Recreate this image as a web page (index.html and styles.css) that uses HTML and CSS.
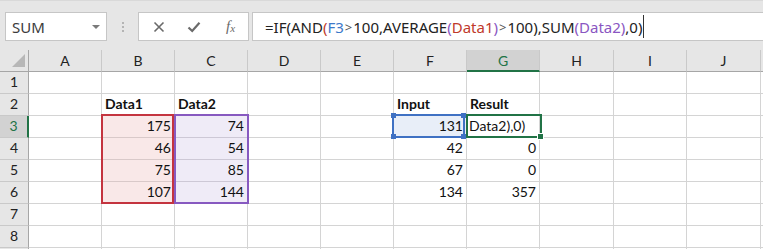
FILE: index.html
```html
<!DOCTYPE html>
<html>
<head>
<meta charset="utf-8">
<link rel="stylesheet" href="styles.css">
</head>
<body>
<div class="app">
  <div class="fbar">
    <div class="namebox">
      <span class="name">SUM</span>
      <svg class="dd" width="8" height="4" viewBox="0 0 8 4"><path d="M0 0H8L4 4Z" fill="#7a7a7a"/></svg>
    </div>
    <div class="dots"><i></i><i></i><i></i></div>
    <div class="btns">
      <svg class="ico" width="12" height="12" viewBox="0 0 12 12"><path d="M1.5 1.5L10.5 10.5M10.5 1.5L1.5 10.5" stroke="#6a6a6a" stroke-width="1.6" fill="none"/></svg>
      <svg class="ico" width="14" height="12" viewBox="0 0 14 12"><path d="M1.5 6.5L5.2 10L12.5 1.8" stroke="#6a6a6a" stroke-width="2.2" fill="none"/></svg>
      <span class="fx">f<sub>x</sub></span>
    </div>
    <div class="formula">
      <span>=IF(AND</span><span class="cr">(</span><span class="cb">F3</span><span class="gt">&gt;</span><span>100,AVERAGE</span><span class="cp">(</span><span class="cr">Data1</span><span class="cp">)</span><span class="gt">&gt;</span><span>100),SUM</span><span class="cp">(Data2)</span><span>,0)</span><span class="caret"></span>
    </div>
  </div>
  <div class="sheet">
    <div class="ch corner"><span class="tri"></span></div>
    <div class="ch">A</div><div class="ch">B</div><div class="ch">C</div><div class="ch">D</div><div class="ch">E</div><div class="ch">F</div><div class="ch sel">G</div><div class="ch">H</div><div class="ch">I</div><div class="ch">J</div><div class="ch last"></div>

    <div class="rh">1</div><div class="c"></div><div class="c"></div><div class="c"></div><div class="c"></div><div class="c"></div><div class="c"></div><div class="c"></div><div class="c"></div><div class="c"></div><div class="c"></div><div class="c"></div>

    <div class="rh">2</div><div class="c"></div><div class="c b">Data1</div><div class="c b">Data2</div><div class="c"></div><div class="c"></div><div class="c b">Input</div><div class="c b">Result</div><div class="c"></div><div class="c"></div><div class="c"></div><div class="c"></div>

    <div class="rh sel">3</div><div class="c"></div><div class="c n red">175</div><div class="c n pur">74</div><div class="c"></div><div class="c"></div><div class="c n blu">131</div><div class="c edit">Data2),0)</div><div class="c"></div><div class="c"></div><div class="c"></div><div class="c"></div>

    <div class="rh">4</div><div class="c"></div><div class="c n red">46</div><div class="c n pur">54</div><div class="c"></div><div class="c"></div><div class="c n">42</div><div class="c n">0</div><div class="c"></div><div class="c"></div><div class="c"></div><div class="c"></div>

    <div class="rh">5</div><div class="c"></div><div class="c n red">75</div><div class="c n pur">85</div><div class="c"></div><div class="c"></div><div class="c n">67</div><div class="c n">0</div><div class="c"></div><div class="c"></div><div class="c"></div><div class="c"></div>

    <div class="rh">6</div><div class="c"></div><div class="c n red">107</div><div class="c n pur">144</div><div class="c"></div><div class="c"></div><div class="c n">134</div><div class="c n">357</div><div class="c"></div><div class="c"></div><div class="c"></div><div class="c"></div>

    <div class="rh">7</div><div class="c"></div><div class="c"></div><div class="c"></div><div class="c"></div><div class="c"></div><div class="c"></div><div class="c"></div><div class="c"></div><div class="c"></div><div class="c"></div><div class="c"></div>

    <div class="rh">8</div><div class="c"></div><div class="c"></div><div class="c"></div><div class="c"></div><div class="c"></div><div class="c"></div><div class="c"></div><div class="c"></div><div class="c"></div><div class="c"></div><div class="c"></div>

    <div class="rh"></div><div class="c"></div><div class="c"></div><div class="c"></div><div class="c"></div><div class="c"></div><div class="c"></div><div class="c"></div><div class="c"></div><div class="c"></div><div class="c"></div><div class="c"></div>

    <div class="box box-red"></div>
    <div class="box box-pur"></div>
    <div class="box box-blu"><i class="h tl"></i><i class="h tr"></i><i class="h bl"></i><i class="h br"></i></div>
    <div class="box box-grn"><i class="gh"></i></div>
  </div>
</div>
</body>
</html>
```
FILE: styles.css
```css
* { box-sizing: border-box; }
html, body { margin: 0; padding: 0; }
body { background: #fff; width: 763px; height: 249px; overflow: hidden; }
.app { width: 763px; }

.fbar {
  background: #e6e6e6;
  height: 50px;
  display: flex;
  align-items: flex-start;
  padding: 12px 0 0 5px;
  border-top: 1px solid #d9d9d9;
}
.namebox {
  width: 102px; height: 29px;
  background: #fff; border: 1px solid #c6c6c6;
  display: flex; align-items: center; justify-content: space-between;
  padding: 0 6px 0 6px;
  margin-top: -1px;
}
.name { font-family: "Noto Sans", sans-serif; font-size: 15px; color: #3b3b3b; }
.dd { margin-top: 1px; }
.dots { width: 31px; display: flex; flex-direction: column; align-items: center; gap: 2px; padding-top: 9px; }
.dots i { display: block; width: 2px; height: 2px; background: #b4b4b4; }
.btns {
  width: 111px; height: 29px; margin-top: -1px;
  background: #fff; border: 1px solid #c6c6c6;
  display: flex; align-items: center;
  padding: 0 0 0 14px;
  gap: 22px;
}
.fx { font-family: "Liberation Serif", serif; font-style: italic; font-size: 15px; color: #6a6a6a; line-height: 1; margin-left: 3px; }
.fx sub { font-size: 11px; vertical-align: 0; position: relative; top: 1px; }
.formula {
  flex: 1; height: 29px; margin-top: -1px; margin-left: 3px;
  background: #fff; border: 1px solid #c6c6c6; border-right: none;
  display: flex; align-items: center;
  padding-left: 12px;
  font-family: "Noto Sans", sans-serif; font-size: 15px; color: #222;
  white-space: pre;
}
.cr { color: #c0392b; }
.cb { color: #3d78c9; }
.cp { color: #8a56c2; }
.gt { color: #555; padding: 0 1px; font-size: 13px; }
.caret { display: inline-block; width: 1px; height: 23px; background: #333; margin-left: 1px; }

.sheet {
  position: relative;
  display: grid;
  grid-template-columns: 29px 73px 73px 73px 73px 73px 73px 73px 74px 73px 74px 1fr;
  grid-template-rows: repeat(10, 22px);
  font-family: Lato, "Liberation Sans", sans-serif;
  font-size: 14px;
  color: #111;
  background: #e6e6e6;
}
.ch {
  background: #e6e6e6;
  border-right: 1px solid #c9c9c9;
  border-bottom: 1px solid #a6a6a6;
  display: flex; align-items: center; justify-content: center;
  color: #222; line-height: 16px; padding-top: 1px;
}
.ch.last { border-right: none; }
.ch.sel { background: #d2d2d2; color: #217346; border-bottom: 2px solid #217346; padding-top: 2px; }
.corner { position: relative; border-right: 1px solid #a6a6a6; }
.tri {
  position: absolute; right: 3px; bottom: 4px;
  width: 0; height: 0;
  border-left: 13px solid transparent;
  border-bottom: 13px solid #b7b7b7;
}
.rh {
  background: #e6e6e6;
  border-right: 1px solid #a6a6a6;
  border-bottom: 1px solid #c9c9c9;
  display: flex; align-items: flex-end; justify-content: center;
  padding-bottom: 3px; line-height: 16px; color: #222;
}
.rh.sel { background: #d2d2d2; color: #217346; border-right: 2px solid #217346; }
.c {
  background: #fff;
  border-right: 1px solid #d4d4d4;
  border-bottom: 1px solid #d4d4d4;
  display: flex; align-items: flex-end;
  padding: 0 3px 3px 3px;
  line-height: 16px;
  white-space: nowrap;
}
.c.n { justify-content: flex-end; }
.c.b { font-weight: 700; }
.c.red { background: #f9e8e8; border-bottom-color: #d9c9c9; }
.c.pur { background: #efebf7; border-bottom-color: #cdc8d6; }
.c.blu { background: #e8eef8; }
.c.edit { padding-left: 2px; }

.box { position: absolute; border: 2px solid; pointer-events: none; }
.box-red { left: 101px; top: 64px; width: 73px; height: 90px; border-color: #c4343f; }
.box-pur { left: 174px; top: 64px; width: 75px; height: 90px; border-color: #8759c0; }
.box-blu { left: 392px; top: 64px; width: 73px; height: 24px; border-color: #3f71c3; }
.box-grn { left: 466px; top: 64px; width: 76px; height: 24px; border-color: #217346; }
.h { position: absolute; width: 5px; height: 5px; background: #3f71c3; }
.h.tl { left: -3px; top: -3px; }
.h.tr { right: -3px; top: -3px; }
.h.bl { left: -3px; bottom: -3px; }
.h.br { right: -3px; bottom: -3px; }
.gh { position: absolute; right: -3px; bottom: -3px; width: 5px; height: 5px; background: #217346; outline: 1px solid #fff; }
```
